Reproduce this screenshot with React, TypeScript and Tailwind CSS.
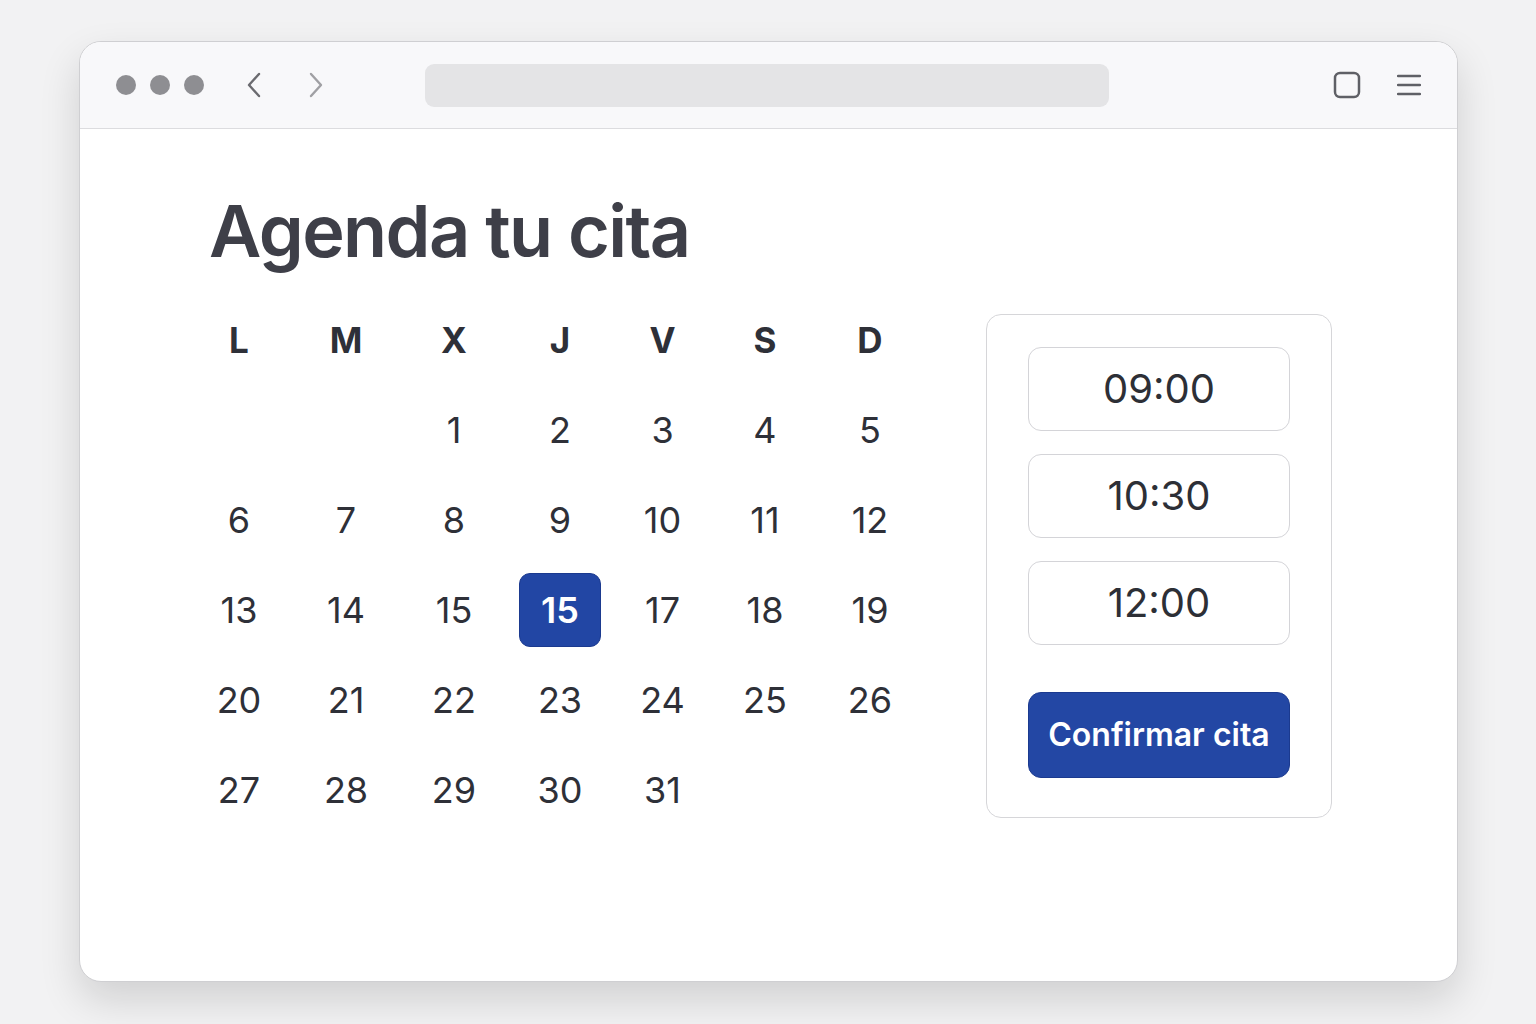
const weekdays = ["L", "M", "X", "J", "V", "S", "D"];

const weeks: (string | null)[][] = [
  [null, null, "1", "2", "3", "4", "5"],
  ["6", "7", "8", "9", "10", "11", "12"],
  ["13", "14", "15", "15", "17", "18", "19"],
  ["20", "21", "22", "23", "24", "25", "26"],
  ["27", "28", "29", "30", "31", null, null],
];

const slots = ["09:00", "10:30", "12:00"];

function BrowserBar() {
  return (
    <div className="flex h-[87px] items-center border-b border-[#dcdcdf] bg-[#f8f8fa] pl-[36px] pr-[36px]">
      <div className="flex items-center gap-[14px]">
        <span className="h-[20px] w-[20px] rounded-full bg-[#8e8e92]" />
        <span className="h-[20px] w-[20px] rounded-full bg-[#8e8e92]" />
        <span className="h-[20px] w-[20px] rounded-full bg-[#8e8e92]" />
      </div>
      <svg className="ml-[42px]" width="16" height="26" viewBox="0 0 16 26" fill="none">
        <path d="M13 2 L3 13 L13 24" stroke="#6b6b70" strokeWidth="2.4" strokeLinecap="round" strokeLinejoin="round" />
      </svg>
      <svg className="ml-[46px]" width="16" height="26" viewBox="0 0 16 26" fill="none">
        <path d="M3 2 L13 13 L3 24" stroke="#a0a0a4" strokeWidth="2.4" strokeLinecap="round" strokeLinejoin="round" />
      </svg>
      <div className="ml-[101px] h-[43px] w-[684px] rounded-[9px] bg-[#e4e4e6]" />
      <div className="ml-auto flex items-center gap-[36px]">
        <svg width="28" height="28" viewBox="0 0 28 28" fill="none">
          <rect x="2" y="2" width="24" height="24" rx="5" stroke="#5f6066" strokeWidth="2.5" />
        </svg>
        <svg width="24" height="24" viewBox="0 0 24 24" fill="none">
          <path d="M1 3h22M1 12h22M1 21h22" stroke="#5f6066" strokeWidth="2.4" strokeLinecap="round" />
        </svg>
      </div>
    </div>
  );
}

export default function App() {
  return (
    <div
      className="min-h-screen bg-[#f2f2f3] pl-[79px] pt-[41px]"
      style={{ fontFamily: "Inter, 'Noto Sans', sans-serif" }}
    >
      <div className="h-[941px] w-[1379px] overflow-hidden rounded-[22px] border border-[#cfcfd2] bg-white shadow-[0_18px_40px_rgba(0,0,0,0.14)]">
        <BrowserBar />
        <div className="pl-[106px] pt-[66px]">
          <h1 className="pl-[23px] text-[72px] font-semibold leading-none tracking-[-1.6px] text-[#3e3f48]">
            Agenda tu cita
          </h1>
          <div className="mt-[29px] flex items-start">
            <div className="grid grid-cols-[106px_108px_108px_104px_101px_104px_106px] text-[#2e3038]">
              {weekdays.map((d) => (
                <div key={d} className="flex h-[89px] items-center justify-center text-[35px] font-bold">
                  {d}
                </div>
              ))}
              {weeks.flat().map((n, i) => {
                const selected = i === 17;
                return (
                  <div key={i} className="flex h-[90px] items-center justify-center">
                    {n === null ? null : selected ? (
                      <span className="flex h-[74px] w-[82px] items-center justify-center rounded-[11px] border border-[#1b3a8f] bg-[#2246a4] text-[36px] font-semibold text-white">
                        {n}
                      </span>
                    ) : (
                      <span className="text-[36px]">{n}</span>
                    )}
                  </div>
                );
              })}
            </div>
            <div className="ml-[63px] mt-[18px] flex w-[346px] flex-col rounded-[15px] border border-[#d6d6d9] px-[41px] pb-[39px] pt-[32px]">
              <div className="flex flex-col gap-[23px]">
                {slots.map((s) => (
                  <div
                    key={s}
                    className="flex h-[84px] items-center justify-center rounded-[13px] border border-[#d4d4d8] text-[40px] text-[#2d2f36]"
                  >
                    {s}
                  </div>
                ))}
              </div>
              <button
                type="button"
                className="mt-[47px] h-[86px] rounded-[13px] border border-[#1b3a8f] bg-[#2347a4] text-[32px] font-semibold text-white"
              >
                Confirmar cita
              </button>
            </div>
          </div>
        </div>
      </div>
    </div>
  );
}
